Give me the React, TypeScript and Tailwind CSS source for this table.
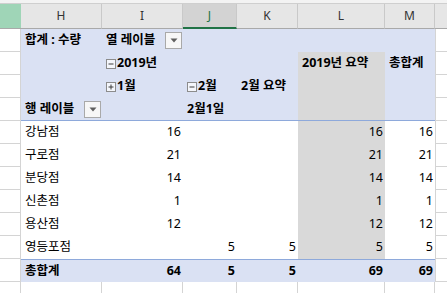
import React from "react";

const COLS = ["H", "I", "J", "K", "L", "M"];
const W = ["w-[81px]", "w-[81px]", "w-[54px]", "w-[61px]", "w-[87px]", "w-[50px]"];

const BLUE = "bg-[#dae1f3]";
const GRAY = "bg-[#d9d9d9]";

function DropBtn() {
  return (
    <div className="w-[17px] h-[17px] border border-[#a9a9a9] bg-[#f7f7f7] flex items-center justify-center shrink-0">
      <svg width="8" height="5" viewBox="0 0 8 5">
        <path d="M0.5 0.5 L7.5 0.5 L4 4.5 Z" fill="#5f5f5f" />
      </svg>
    </div>
  );
}

function Toggle({ open }: { open: boolean }) {
  return (
    <svg width="10" height="10" viewBox="0 0 10 10" className="mr-[1px] shrink-0">
      <rect x="0.5" y="0.5" width="9" height="9" fill="#f4f6fb" stroke="#8c8c8c" />
      <path d="M2.5 5 H7.5" stroke="#3c3c3c" strokeWidth="1" />
      {!open && <path d="M5 2.5 V7.5" stroke="#3c3c3c" strokeWidth="1" />}
    </svg>
  );
}

type Cell = {
  text?: React.ReactNode;
  bg?: string;
  right?: boolean;
  bold?: boolean;
  btn?: boolean;
};

function Row({ cells, divider, top }: { cells: Cell[]; divider?: boolean; top?: boolean }) {
  return (
    <div className="flex h-[23px]">
      <div className="w-[21px] shrink-0 border-r border-b border-[#d4d4d4] bg-white" />
      {cells.map((c, i) => (
        <div
          key={i}
          className={[
            W[i],
            "shrink-0 flex items-center overflow-hidden whitespace-nowrap text-black",
            c.bg ?? "bg-white",
            c.right ? "justify-end pr-[2px]" : "pl-[4px]",
            c.btn ? "justify-between pr-[1px]" : "",
            c.bold ? "font-bold" : "",
            divider ? "border-b border-[#8ea9db]" : "",
            top ? "border-t border-[#8ea9db]" : "",
          ].join(" ")}
        >
          {c.text !== undefined && <span className="flex items-center">{c.text}</span>}
          {c.btn && <DropBtn />}
        </div>
      ))}
      <div className="flex-1 border-l border-b border-[#d4d4d4] bg-white" />
    </div>
  );
}

const stores: [string, string, string, string, string, string][] = [
  ["강남점", "16", "", "", "16", "16"],
  ["구로점", "21", "", "", "21", "21"],
  ["분당점", "14", "", "", "14", "14"],
  ["신촌점", "1", "", "", "1", "1"],
  ["용산점", "12", "", "", "12", "12"],
  ["영등포점", "", "5", "5", "5", "5"],
];

export default function App() {
  return (
    <div className="w-[447px] h-[293px] overflow-hidden bg-white text-[12.5px] leading-none font-['Noto_Sans','Noto_Sans_CJK_KR',sans-serif]">
      {/* ribbon edge */}
      <div className="h-[4px] bg-[#f3f3f3] border-b border-[#cfcfcf]" />
      {/* column headings */}
      <div className="flex h-[25px]">
        <div className="w-[21px] shrink-0 bg-[#9fd5b7] border-b border-[#a9a9a9]" />
        {COLS.map((c, i) => (
          <div
            key={c}
            className={[
              W[i],
              "shrink-0 flex items-center justify-center border-r border-[#c9c9c9] text-[#333] text-[12px]",
              c === "J" ? "bg-[#d3d3d3] border-b-2 border-b-[#217346] text-[#217346]" : "bg-[#e6e6e6] border-b border-b-[#a9a9a9]",
            ].join(" ")}
          >
            {c}
          </div>
        ))}
        <div className="flex-1 bg-[#e6e6e6] border-b border-[#a9a9a9]" />
      </div>

      {/* pivot header area */}
      <Row
        cells={[
          { text: "합계 : 수량", bg: BLUE, bold: true },
          { text: "열 레이블", bg: BLUE, bold: true, btn: true },
          { bg: BLUE },
          { bg: BLUE },
          { bg: BLUE },
          { bg: BLUE },
        ]}
      />
      <Row
        cells={[
          { bg: BLUE },
          { text: <><Toggle open />2019년</>, bg: BLUE, bold: true },
          { bg: BLUE },
          { bg: BLUE },
          { text: "2019년 요약", bg: GRAY, bold: true },
          { text: "총합계", bg: BLUE, bold: true },
        ]}
      />
      <Row
        cells={[
          { bg: BLUE },
          { text: <><Toggle open={false} />1월</>, bg: BLUE, bold: true },
          { text: <><Toggle open />2월</>, bg: BLUE, bold: true },
          { text: "2월 요약", bg: BLUE, bold: true },
          { bg: GRAY },
          { bg: BLUE },
        ]}
      />
      <Row
        divider
        cells={[
          { text: "행 레이블", bg: BLUE, bold: true, btn: true },
          { bg: BLUE },
          { text: "2월1일", bg: BLUE, bold: true },
          { bg: BLUE },
          { bg: GRAY },
          { bg: BLUE },
        ]}
      />

      {/* store rows */}
      {stores.map((r) => (
        <Row
          key={r[0]}
          cells={[
            { text: r[0] },
            { text: r[1], right: true },
            { text: r[2], right: true },
            { text: r[3], right: true },
            { text: r[4], right: true, bg: GRAY },
            { text: r[5], right: true },
          ]}
        />
      ))}

      {/* grand total */}
      <Row
        top
        cells={[
          { text: "총합계", bg: BLUE, bold: true },
          { text: "64", bg: BLUE, bold: true, right: true },
          { text: "5", bg: BLUE, bold: true, right: true },
          { text: "5", bg: BLUE, bold: true, right: true },
          { text: "69", bg: BLUE, bold: true, right: true },
          { text: "69", bg: BLUE, bold: true, right: true },
        ]}
      />

      {/* empty sheet row below */}
      <div className="flex h-[23px]">
        <div className="w-[21px] shrink-0 border-r border-[#d4d4d4]" />
        {W.map((w, i) => (
          <div key={i} className={`${w} shrink-0 border-r border-[#d4d4d4]`} />
        ))}
        <div className="flex-1" />
      </div>
    </div>
  );
}
